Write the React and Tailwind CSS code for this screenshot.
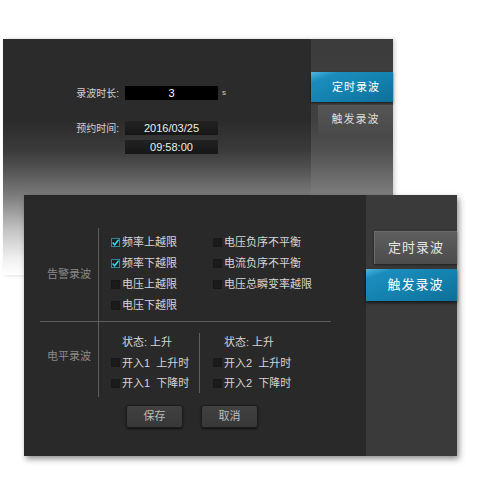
import React from "react";

const FONT = "font-['Liberation_Sans','Noto_Sans_CJK_SC',sans-serif]";

function Box({ checked }) {
  if (checked) {
    return (
      <span className="relative inline-block w-[9px] h-[9px] bg-[#1a1f22] border border-[#2b8a9a] shrink-0">
        <svg viewBox="0 0 9 9" className="absolute left-[-1px] top-[-1px] w-[9px] h-[9px]">
          <path d="M1.6 4.6 L3.6 6.8 L7.6 1.8" fill="none" stroke="#3fd6e6" strokeWidth="1.5" />
        </svg>
      </span>
    );
  }
  return <span className="inline-block w-[9px] h-[9px] bg-[#1b1b1b] border border-[#181818] shrink-0" />;
}

function Check({ checked, children }) {
  return (
    <div className="h-[21px] flex items-center gap-[2px] text-[11px] text-[#d6d6d6] whitespace-nowrap">
      <Box checked={checked} />
      <span>{children}</span>
    </div>
  );
}

function Check2({ children }) {
  return (
    <div className="h-[20.5px] flex items-center gap-[2px] text-[11px] text-[#d6d6d6] whitespace-nowrap">
      <Box />
      <span>{children}</span>
    </div>
  );
}

export default function App() {
  return (
    <div className={`relative w-[478px] h-[482px] bg-white overflow-hidden ${FONT}`}>
      {/* Top window */}
      <div className="absolute left-[3px] top-[39px] w-[390px] h-[236px] flex shadow-[2px_0_4px_rgba(0,0,0,0.18)]">
        <div className="w-[308px] h-full bg-[linear-gradient(180deg,#2b2b2b_0%,#2b2b2b_34%,#3a3a3a_47%,#525252_55%,#7a7a7a_66%,#c4c4c4_81%,#f0f0f0_93%,#ffffff_100%)] pt-[47px]">
          <div className="flex items-center h-[14px]">
            <div className="w-[116px] text-right text-[10px] text-[#d0d0d0]">录波时长:</div>
            <div className="ml-[6px] w-[93px] h-[14px] bg-black flex items-center justify-center text-[11px] text-white">3</div>
            <div className="ml-[4px] text-[8px] text-[#d0d0d0]">s</div>
          </div>
          <div className="flex items-center h-[14px] mt-[21px]">
            <div className="w-[116px] text-right text-[10px] text-[#d0d0d0]">预约时间:</div>
            <div className="ml-[6px] w-[93px] h-[14px] bg-[linear-gradient(180deg,#222_0%,#171717_100%)] flex items-center justify-center text-[11px] text-[#eeeeee]">2016/03/25</div>
          </div>
          <div className="flex items-center h-[14px] mt-[5px]">
            <div className="w-[116px]" />
            <div className="ml-[6px] w-[93px] h-[14px] bg-[linear-gradient(180deg,#222_0%,#171717_100%)] flex items-center justify-center text-[11px] text-[#eeeeee]">09:58:00</div>
          </div>
        </div>
        <div className="w-[82px] h-full bg-[linear-gradient(180deg,#3b3b3b_0%,#404040_34%,#505050_47%,#626262_55%,#7e7e7e_66%,#c8c8c8_81%,#f2f2f2_93%,#ffffff_100%)] pt-[33px] flex flex-col items-end">
          <div className="w-[82px] h-[30px] bg-[linear-gradient(160deg,#4fb4de_0%,#1a8dbd_18%,#137fac_60%,#0e6f98_100%)] shadow-[0_1px_2px_rgba(0,0,0,0.6)] flex items-center justify-center text-[11px] text-white tracking-[1px] pl-[8px]">定时录波</div>
          <div className="mt-[3px] w-[75px] h-[29px] bg-[linear-gradient(180deg,#555_0%,#4a4a4a_100%)] flex items-center justify-center text-[11px] text-[#dddddd] tracking-[1px]">触发录波</div>
        </div>
      </div>

      {/* Bottom window */}
      <div className="absolute left-[24px] top-[195px] w-[433px] h-[261px] flex shadow-[2px_3px_6px_rgba(0,0,0,0.45)]">
        <div className="w-[342px] h-full bg-[#292929] pt-[33px]">
          {/* Section 1 */}
          <div className="flex h-[93px]">
            <div className="w-[74px] flex items-center justify-center pl-[16px] text-[11px] text-[#8a8a8a]">告警录波</div>
            <div className="border-l border-[#5e5e5e] pl-[12px] pt-[4px] flex">
              <div className="w-[102px] flex flex-col">
                <Check checked>频率上越限</Check>
                <Check checked>频率下越限</Check>
                <Check>电压上越限</Check>
                <Check>电压下越限</Check>
              </div>
              <div className="flex flex-col">
                <Check>电压负序不平衡</Check>
                <Check>电流负序不平衡</Check>
                <Check>电压总瞬变率越限</Check>
              </div>
            </div>
          </div>
          <div className="ml-[16px] w-[291px] h-px bg-[#5e5e5e]" />
          {/* Section 2 */}
          <div className="flex h-[75px]">
            <div className="w-[74px] flex items-center justify-center pl-[16px] pb-[6px] text-[11px] text-[#8a8a8a]">电平录波</div>
            <div className="border-l border-[#5e5e5e] pl-[12px] pt-[10px] flex items-start">
              <div className="w-[88px] flex flex-col">
                <div className="h-[20.5px] flex items-center pl-[11px] text-[11px] text-[#d6d6d6]">状态: 上升</div>
                <Check2>开入1&nbsp;&nbsp;上升时</Check2>
                <Check2>开入1&nbsp;&nbsp;下降时</Check2>
              </div>
              <div className="w-px h-[60px] bg-[#5e5e5e] mt-[1px]" />
              <div className="ml-[13px] flex flex-col">
                <div className="h-[20.5px] flex items-center pl-[11px] text-[11px] text-[#d6d6d6]">状态: 上升</div>
                <Check2>开入2&nbsp;&nbsp;上升时</Check2>
                <Check2>开入2&nbsp;&nbsp;下降时</Check2>
              </div>
            </div>
          </div>
          {/* Buttons */}
          <div className="flex gap-[18px] pl-[102px] mt-[8px]">
            <div className="w-[57px] h-[23px] rounded-[3px] border border-[#1c1c1c] bg-[linear-gradient(180deg,#414141_0%,#373737_100%)] shadow-[0_1px_2px_rgba(0,0,0,0.6)] flex items-center justify-center text-[11px] text-[#bdbdbd]">保存</div>
            <div className="w-[57px] h-[23px] rounded-[3px] border border-[#1c1c1c] bg-[linear-gradient(180deg,#414141_0%,#373737_100%)] shadow-[0_1px_2px_rgba(0,0,0,0.6)] flex items-center justify-center text-[11px] text-[#bdbdbd]">取消</div>
          </div>
        </div>
        <div className="w-[91px] h-full bg-[#3a3a3a] pt-[36px] flex flex-col items-end">
          <div className="w-[83px] h-[33px] bg-[linear-gradient(180deg,#5e5e5e_0%,#4c4c4c_100%)] border-t border-l border-[#6a6a6a] shadow-[0_1px_2px_rgba(0,0,0,0.5)] flex items-center justify-center text-[13px] text-[#e6e6e6] tracking-[1px]">定时录波</div>
          <div className="mt-[5px] w-[91px] h-[32px] bg-[linear-gradient(160deg,#4fb4de_0%,#1a8dbd_16%,#137fac_60%,#0e6f98_100%)] shadow-[0_2px_3px_rgba(0,0,0,0.6)] flex items-center justify-center text-[13px] text-white tracking-[1px] pl-[8px]">触发录波</div>
        </div>
      </div>
    </div>
  );
}
